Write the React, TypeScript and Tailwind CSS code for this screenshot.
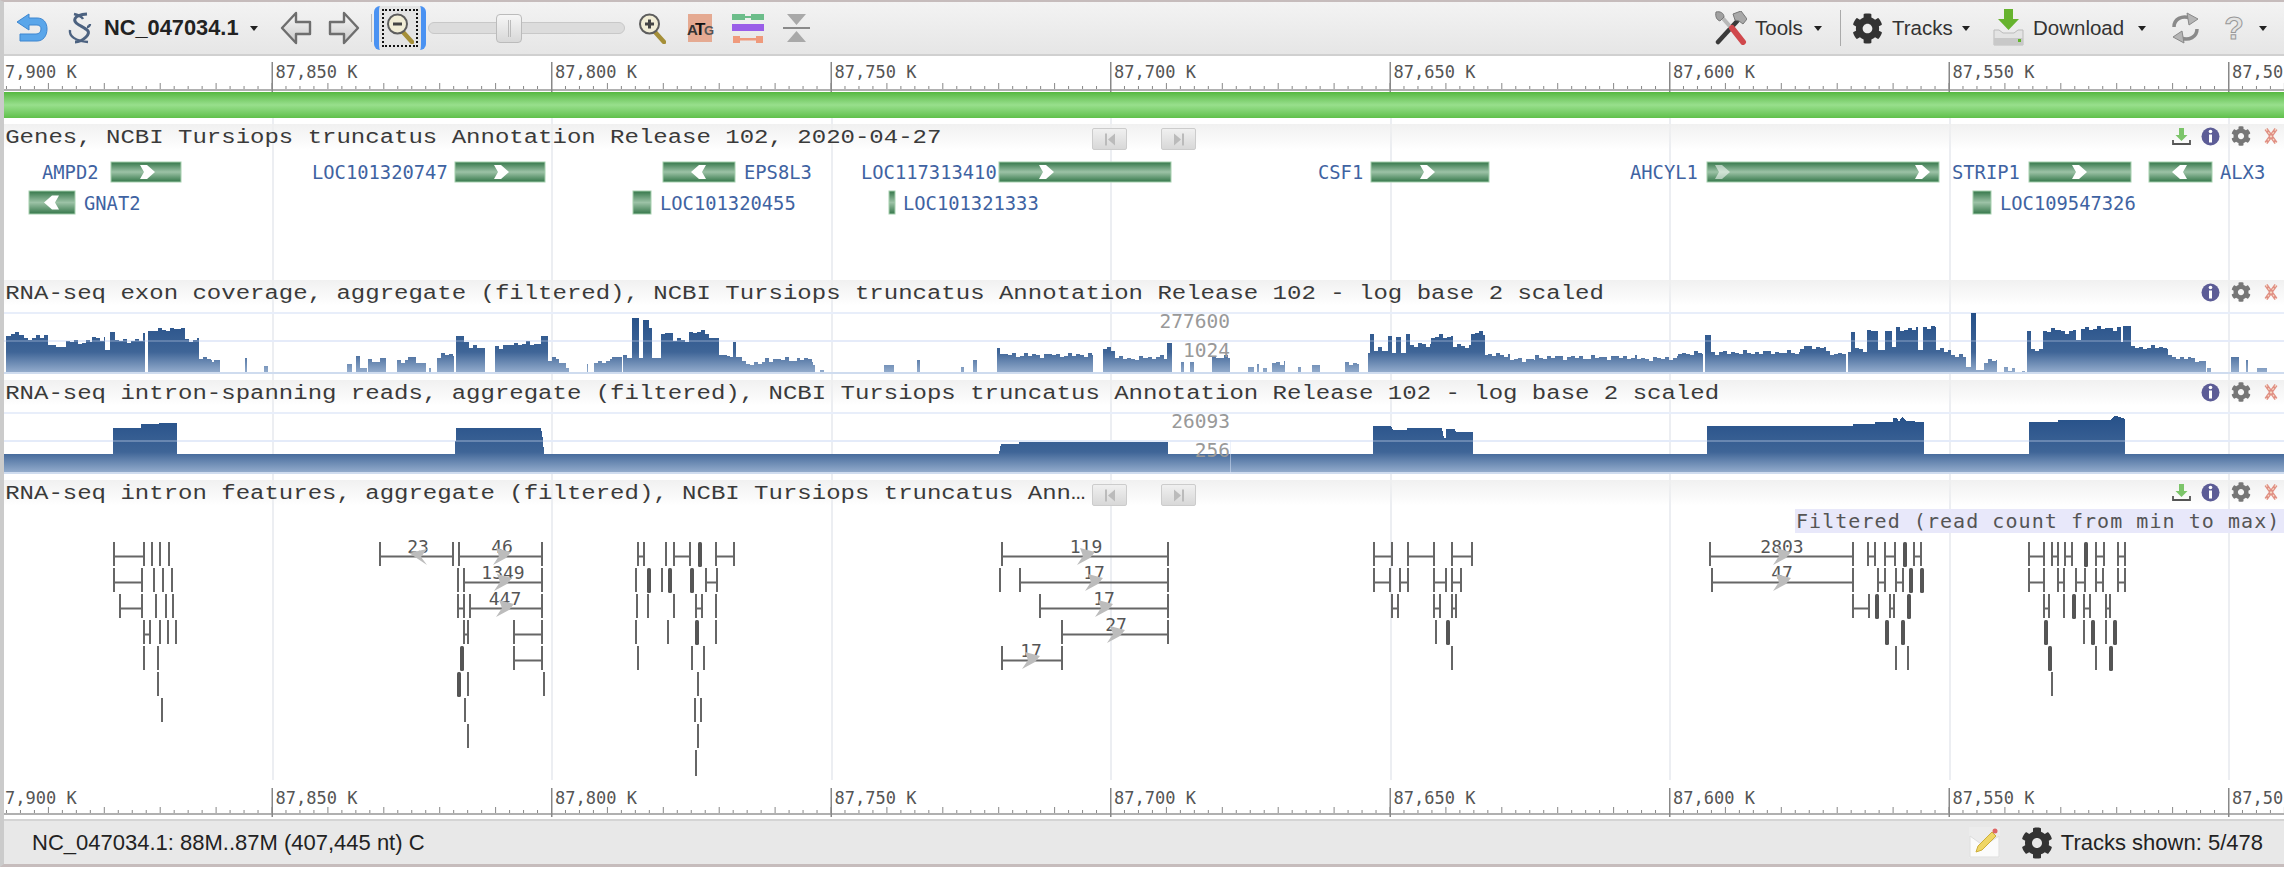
import { FaCog } from "react-icons/fa";

const MONO = "font-['DejaVu_Sans_Mono',monospace]";
const MAJORS = [-8, 271.5, 551, 830.5, 1110, 1389.5, 1669, 1948.5, 2228];
const MAJOR_LABELS = ["7,900 K", "87,850 K", "87,800 K", "87,750 K", "87,700 K", "87,650 K", "87,600 K", "87,550 K", "87,50"];

type Seg = [number, number, number];

// traced from the coverage track: [x0, x1, y], in crop units
const EXON_A: Seg[] = [
  [12, 22, 197], [22, 48, 192], [48, 70, 208], [70, 95, 198], [95, 110, 225], [110, 130, 232], [130, 180, 215], [180, 205, 205], [205, 215, 240], [215, 225, 185],
  [225, 280, 212], [280, 285, 190], [290, 310, 183], [310, 355, 178], [355, 362, 175], [362, 390, 210], [390, 415, 265], [415, 420, 275], [420, 432, 270],
  [480, 484, 265], [518, 526, 288], [680, 690, 282], [697, 705, 258], [705, 720, 295], [722, 745, 275], [745, 757, 265], [778, 800, 272], [800, 815, 260], [815, 835, 280], [840, 845, 295],
  [857, 865, 265], [865, 890, 253], [893, 910, 198], [910, 920, 217], [920, 950, 232], [970, 1000, 230], [1000, 1060, 222], [1060, 1075, 198], [1075, 1095, 268], [1095, 1110, 280], [1110, 1115, 295],
  [1150, 1153, 282], [1165, 1200, 275], [1200, 1220, 262], [1222, 1228, 255], [1228, 1238, 265], [1238, 1252, 145], [1252, 1260, 265], [1260, 1272, 150], [1272, 1278, 175], [1278, 1296, 265],
  [1296, 1320, 188], [1320, 1350, 210], [1350, 1390, 187], [1390, 1410, 203], [1410, 1430, 255], [1430, 1437, 262], [1437, 1442, 215], [1442, 1455, 262], [1455, 1500, 280], [1500, 1568, 268],
];
const EXON_B: Seg[] = [
  [0, 25, 268], [25, 30, 285], [40, 48, 300], [165, 185, 285], [230, 236, 270], [316, 322, 290], [340, 347, 270], [387, 392, 235], [392, 575, 255], [593, 618, 235], [618, 675, 265], [675, 720, 262], [720, 730, 218],
  [747, 752, 275], [765, 772, 275], [807, 843, 262], [878, 890, 290], [895, 900, 283], [908, 915, 295], [925, 950, 278], [977, 982, 290], [1003, 1020, 285], [1068, 1095, 280], [1113, 1118, 250], [1118, 1126, 192],
  [1126, 1153, 240], [1153, 1160, 198], [1160, 1168, 250], [1168, 1178, 200], [1178, 1188, 250], [1188, 1196, 192], [1196, 1237, 225], [1237, 1280, 200], [1280, 1315, 228], [1315, 1343, 190],
];
const EXON_C: Seg[] = [
  [0, 50, 255], [50, 100, 268], [100, 300, 262], [300, 380, 265], [380, 430, 250], [433, 445, 195], [445, 620, 248], [620, 670, 232], [670, 710, 250], [713, 720, 245], [720, 728, 187], [728, 750, 240],
  [750, 772, 183], [772, 785, 240], [785, 800, 182], [800, 808, 230], [808, 850, 177], [850, 860, 240], [860, 885, 170], [885, 915, 240], [915, 945, 258], [945, 955, 290], [955, 965, 128], [965, 980, 300],
  [980, 1005, 272], [1020, 1040, 295], [1055, 1060, 303], [1065, 1072, 182], [1072, 1095, 240], [1095, 1130, 180], [1130, 1160, 185], [1160, 1170, 210], [1170, 1248, 175], [1248, 1252, 215], [1252, 1268, 168],
  [1268, 1340, 232], [1340, 1385, 262], [1385, 1415, 272], [1418, 1425, 295], [1465, 1480, 260], [1493, 1498, 270], [1515, 1535, 295],
];

function exonPath() {
  let d = "";
  let n = 0;
  const add = (segs: Seg[], base: number) => {
    for (const [a, b, zy] of segs) {
      const x0 = Math.round(base + a / 1.96);
      const x1 = Math.round(base + b / 1.96);
      const y = 270 + zy / 3;
      d += `M${x0} 373 `;
      if (x1 - x0 > 10) {
        for (let x = x0; x < x1; x += 4) {
          n += 1;
          const yy = Math.round(y + Math.sin(n * 2.3) * 1.6 + Math.sin(n * 5.1));
          d += `L${x} ${yy} L${Math.min(x + 4, x1)} ${yy} `;
        }
      } else {
        d += `L${x0} ${Math.round(y)} L${x1} ${Math.round(y)} `;
      }
      d += `L${x1} 373 Z `;
    }
  };
  add(EXON_A, 0);
  add(EXON_B, 800);
  add(EXON_C, 1484);
  return d;
}

const INTRON_TOP: [number, number][] = [
  [113, 454], [113, 428], [141, 428], [141, 424], [177, 423], [177, 454],
  [455, 454], [456, 428], [541, 428], [543, 440], [544, 454],
  [999, 454], [1001, 444], [1019, 444], [1019, 442], [1168, 442], [1168, 454],
  [1373, 454], [1373, 426], [1391, 426], [1393, 430], [1407, 430], [1407, 428], [1442, 428], [1444, 438], [1446, 438], [1446, 429], [1455, 429], [1456, 432], [1473, 432], [1473, 454],
  [1707, 454], [1707, 426], [1853, 426], [1853, 424], [1875, 424], [1875, 422], [1893, 422], [1893, 418], [1897, 418], [1899, 422], [1902, 417], [1906, 421], [1924, 422], [1924, 454],
  [2029, 454], [2029, 422], [2058, 422], [2058, 420], [2110, 420], [2115, 416], [2120, 417], [2125, 419], [2125, 454],
];

const intronPath = `M4 473 L4 454 ${INTRON_TOP.map(([x, y]) => `L${x} ${y}`).join(" ")} L2284 454 L2284 473 Z`;

type Gene = { name: string; row: number; box: [number, number]; label: number; arrows?: [number, "r" | "l", number?][] };

const GENES: Gene[] = [
  { name: "AMPD2", row: 0, box: [111, 181], label: 42, arrows: [[147, "r"]] },
  { name: "LOC101320747", row: 0, box: [455, 545], label: 312, arrows: [[501, "r"]] },
  { name: "EPS8L3", row: 0, box: [663, 735], label: 744, arrows: [[699, "l"]] },
  { name: "LOC117313410", row: 0, box: [999, 1171], label: 861, arrows: [[1046, "r"]] },
  { name: "CSF1", row: 0, box: [1371, 1489], label: 1318, arrows: [[1427, "r"]] },
  { name: "AHCYL1", row: 0, box: [1707, 1939], label: 1630, arrows: [[1722, "r", 0.55], [1922, "r"]] },
  { name: "STRIP1", row: 0, box: [2029, 2131], label: 1952, arrows: [[2079, "r"]] },
  { name: "ALX3", row: 0, box: [2149, 2212], label: 2220, arrows: [[2180, "l"]] },
  { name: "GNAT2", row: 1, box: [29, 75], label: 84, arrows: [[52, "l"]] },
  { name: "LOC101320455", row: 1, box: [633, 651], label: 660 },
  { name: "LOC101321333", row: 1, box: [889, 895], label: 903 },
  { name: "LOC109547326", row: 1, box: [1973, 1991], label: 2000 },
];

// intron features: H = two ticks joined, T = lone tick, B = heavy tick
const H: [number, number, number][] = [
  [0, 114, 144], [1, 114, 142], [2, 120, 142], [3, 144, 150],
  [0, 380, 453], [0, 459, 542], [1, 464, 542], [2, 458, 464], [2, 470, 542], [3, 464, 468], [3, 514, 542], [4, 514, 542],
  [0, 638, 644], [0, 674, 690], [0, 716, 734], [1, 706, 717], [2, 696, 702],
  [0, 1002, 1168], [1, 1020, 1168], [2, 1040, 1168], [3, 1062, 1168], [4, 1002, 1062],
  [0, 1374, 1392], [0, 1408, 1434], [0, 1452, 1472], [1, 1374, 1390], [1, 1400, 1408], [1, 1434, 1446], [1, 1452, 1461], [2, 1392, 1398], [2, 1434, 1440], [2, 1452, 1456],
  [0, 1710, 1853], [0, 1868, 1875], [0, 1885, 1895], [0, 1914, 1921], [1, 1712, 1853], [1, 1878, 1885], [1, 1896, 1903], [2, 1853, 1869], [2, 1890, 1894],
  [0, 2029, 2044], [0, 2052, 2058], [0, 2065, 2072], [0, 2096, 2104], [0, 2118, 2125], [1, 2029, 2044], [1, 2058, 2064], [1, 2076, 2085], [1, 2096, 2103], [1, 2118, 2125], [2, 2044, 2049], [2, 2084, 2090], [2, 2106, 2110],
];
const T: [number, number][] = [
  [0, 152], [0, 160], [0, 169], [1, 154], [1, 163], [1, 172], [2, 156], [2, 166], [2, 173], [3, 160], [3, 168], [3, 176], [4, 144], [4, 158], [5, 158], [6, 162],
  [1, 458], [5, 468], [5, 544], [6, 465], [7, 468],
  [0, 666], [1, 636], [1, 662], [2, 637], [2, 648], [2, 674], [2, 716], [3, 636], [3, 668], [3, 716], [4, 638], [4, 692], [4, 704], [5, 698], [6, 695], [6, 701], [7, 698], [8, 696],
  [1, 1000], [3, 1436], [4, 1452],
  [4, 1896], [4, 1908],
  [2, 2064], [3, 2084], [3, 2106], [4, 2096], [5, 2052],
];
const B: [number, number][] = [
  [4, 462], [5, 459],
  [0, 700], [1, 649], [1, 670], [1, 692], [3, 697],
  [3, 1448],
  [0, 1905], [1, 1911], [1, 1922], [2, 1877], [2, 1909], [3, 1887], [3, 1903],
  [0, 2086], [2, 2074], [3, 2046], [3, 2093], [3, 2115], [4, 2050], [4, 2111],
];
const COUNTS: [string, number, number, boolean?][] = [
  ["23", 418, 0, true], ["46", 502, 0], ["1349", 503, 1], ["447", 505, 2],
  ["119", 1086, 0], ["17", 1094, 1], ["17", 1104, 2], ["27", 1116, 3], ["17", 1031, 4],
  ["2803", 1782, 0], ["47", 1782, 1],
];

function rowTop(r: number) {
  return 542 + r * 26;
}

function Ruler({ labelY, tickTop }: { labelY: number; tickTop: number }) {
  const ticks: number[] = [];
  for (let i = 0; i < 170; i++) ticks.push(i);
  return (
    <svg viewBox="4 0 2280 39" className="block h-[39px] w-[2280px] overflow-visible">
      <rect x="4" y="33" width="2280" height="2" fill="#b0b0b0" />
      {ticks.map((i) => {
        const x = -8 + i * 13.975;
        const tall = i % 4 === 0;
        return <rect key={i} x={x} y={tall ? 27 : 30} width="1" height={tall ? 6 : 3} fill="#888" />;
      })}
      {MAJORS.map((x, i) => (
        <g key={x}>
          <rect x={x} y={tickTop} width="1.5" height={37 - tickTop} fill="#888" />
          <text x={i === 0 ? 5 : x + 4} y={labelY} fontFamily="DejaVu Sans Mono, monospace" fontSize="17" fill="#555">
            {MAJOR_LABELS[i]}
          </text>
        </g>
      ))}
    </svg>
  );
}

function Caret() {
  return <div className="h-0 w-0 border-x-[4.5px] border-t-[5px] border-x-transparent border-t-[#222]" />;
}

function InfoIcon() {
  return (
    <svg viewBox="0 0 19 19" className="h-[19px] w-[19px]">
      <circle cx="9.5" cy="9.5" r="9" fill="#5c5c96" />
      <circle cx="9.5" cy="4.5" r="1.8" fill="#fff" />
      <rect x="8" y="7.5" width="3" height="8" fill="#fff" />
    </svg>
  );
}

function CloseIcon() {
  return (
    <svg viewBox="0 0 14 18" className="h-[18px] w-[14px]">
      <path d="M2 2 L12 16 M12 2 L2 16" stroke="#e08f84" strokeWidth="3.6" />
      <path d="M2 2 L12 16 M12 2 L2 16" stroke="#f6dcc4" strokeWidth="1.2" strokeDasharray="2 2" />
    </svg>
  );
}

function SmallDownload() {
  return (
    <svg viewBox="0 0 19 19" className="h-[19px] w-[19px]">
      <path d="M7 1 H12 V8 H15.5 L9.5 14 L3.5 8 H7 Z" fill="#7cc56a" />
      <path d="M1 13 V17 H18 V13" fill="none" stroke="#555" strokeWidth="1.8" />
    </svg>
  );
}

function TrackIcons({ download }: { download?: boolean }) {
  return (
    <div className="absolute top-[2px] right-[6px] flex items-center">
      {download && (
        <div className="mr-[10px]">
          <SmallDownload />
        </div>
      )}
      <InfoIcon />
      <FaCog className="mr-[13px] ml-[11px] h-[20px] w-[20px] text-[#777]" />
      <CloseIcon />
    </div>
  );
}

function NavButtons() {
  return (
    <div className="absolute top-[4px] left-[1088px] flex gap-[34px]">
      {[0, 1].map((dir) => (
        <div key={dir} className="flex h-[22px] w-[35px] items-center justify-center rounded-[2px] border border-[#ccc] bg-gradient-to-b from-[#f0f0f0] to-[#d8d8d8]">
          <svg viewBox="0 0 14 12" className="h-[13px] w-[14px]">
            {dir === 0 ? <path d="M2 0 H4 V12 H2 Z M12 0 V12 L5 6 Z" fill="#bbb" /> : <path d="M10 0 H12 V12 H10 Z M2 0 V12 L9 6 Z" fill="#bbb" />}
          </svg>
        </div>
      ))}
    </div>
  );
}

function TrackHeader({ title, download, nav }: { title: string; download?: boolean; nav?: boolean }) {
  return (
    <div className="relative h-[26px] bg-gradient-to-b from-[#efefef]/90 to-transparent">
      <div className="origin-left scale-x-[1.2] pt-[2px] pl-[1px] font-['Liberation_Mono',monospace] text-[20px] leading-[24px] whitespace-nowrap text-[#3a3a3a]">{title}</div>
      {nav && <NavButtons />}
      <TrackIcons download={download} />
    </div>
  );
}

function GeneTrack() {
  return (
    <svg viewBox="4 150 2280 130" className="block h-[130px] w-[2280px]">
      <defs>
        <linearGradient id="geneFill" x1="0" y1="0" x2="0" y2="1">
          <stop offset="0" stopColor="#35774a" />
          <stop offset="0.5" stopColor="#9cc2a6" />
          <stop offset="1" stopColor="#35774a" />
        </linearGradient>
      </defs>
      {GENES.map((g) => {
        const top = g.row === 0 ? 162 : 191;
        const h = g.row === 0 ? 20 : 23;
        const cy = top + h / 2;
        return (
          <g key={g.name}>
            <rect x={g.box[0]} y={top} width={g.box[1] - g.box[0]} height={h} fill="url(#geneFill)" stroke="#a5cfae" strokeWidth="1" />
            {g.arrows?.map(([x, dir, op]) => (
              <polygon
                key={x}
                points={dir === "r" ? "-7,-7 0,-7 8,0 0,7 -7,7 -3,0" : "7,-7 0,-7 -8,0 0,7 7,7 3,0"}
                transform={`translate(${x} ${cy})`}
                fill="#fff"
                opacity={op ?? 1}
              />
            ))}
            <text x={g.label} y={cy + 7} fontFamily="DejaVu Sans Mono, monospace" fontSize="18.8" fill="#3f63a2">
              {g.name}
            </text>
          </g>
        );
      })}
    </svg>
  );
}

function Scale({ top, bottom, topY, botY }: { top: string; bottom: string; topY: number; botY: number }) {
  return (
    <g fontFamily="DejaVu Sans Mono, monospace" fontSize="19.5" fill="#999" textAnchor="end">
      <text x="1230" y={topY}>
        {top}
      </text>
      <text x="1230" y={botY}>
        {bottom}
      </text>
    </g>
  );
}

function Coverage() {
  return (
    <svg viewBox="4 306 2280 74" className="block h-[74px] w-[2280px]">
      <defs>
        <linearGradient id="exonFill" gradientUnits="userSpaceOnUse" x1="0" y1="313" x2="0" y2="373">
          <stop offset="0" stopColor="#244f88" />
          <stop offset="0.65" stopColor="#3f6597" />
          <stop offset="1" stopColor="#96aece" />
        </linearGradient>
      </defs>
      <rect x="4" y="312" width="2280" height="2" fill="#e8eefa" />
      <rect x="4" y="340" width="2280" height="2" fill="#e8eefa" />
      <path d={exonPath()} fill="url(#exonFill)" shapeRendering="crispEdges" />
      <rect x="4" y="340" width="2280" height="2" fill="#dbe5f7" opacity="0.25" />
      <rect x="4" y="372" width="2280" height="2" fill="#cfdcef" />
      <Scale top="277600" bottom="1024" topY={328} botY={357} />
    </svg>
  );
}

function Spanning() {
  return (
    <svg viewBox="4 406 2280 74" className="block h-[74px] w-[2280px]">
      <defs>
        <linearGradient id="spanFill" gradientUnits="userSpaceOnUse" x1="0" y1="413" x2="0" y2="473">
          <stop offset="0" stopColor="#244f88" />
          <stop offset="0.65" stopColor="#3f6597" />
          <stop offset="1" stopColor="#96aece" />
        </linearGradient>
      </defs>
      <rect x="4" y="412" width="2280" height="2" fill="#e8eefa" />
      <rect x="4" y="440" width="2280" height="2" fill="#e8eefa" />
      <path d={intronPath} fill="url(#spanFill)" shapeRendering="crispEdges" />
      <rect x="4" y="440" width="2280" height="2" fill="#dbe5f7" opacity="0.3" />
      <rect x="4" y="472" width="2280" height="2" fill="#cfdcef" />
      <rect x="1230" y="440" width="1" height="33" fill="#dbe5f7" opacity="0.5" />
      <Scale top="26093" bottom="256" topY={428} botY={457} />
    </svg>
  );
}

function Features() {
  return (
    <svg viewBox="4 506 2280 274" className="block h-[274px] w-[2280px]">
      {H.map(([r, a, b], i) => (
        <g key={i} fill="#666">
          <rect x={a - 1} y={rowTop(r)} width="2" height="24" />
          <rect x={b - 1} y={rowTop(r)} width="2" height="24" />
          <rect x={a} y={rowTop(r) + 13.5} width={b - a} height="2" />
        </g>
      ))}
      {T.map(([r, x], i) => (
        <rect key={i} x={x - 1} y={rowTop(r)} width="2" height="24" fill="#666" />
      ))}
      {B.map(([r, x], i) => (
        <rect key={i} x={x - 2} y={rowTop(r)} width="4" height="25" rx="1.5" fill="#555" />
      ))}
      {/* the last reads trail off below the lower row */}
      <rect x="695" y="752" width="2" height="24" fill="#666" />
      {COUNTS.map(([n, x, r, left], i) => (
        <g key={i}>
          <text x={x} y={rowTop(r) + 11} textAnchor="middle" fontFamily="DejaVu Sans Mono, monospace" fontSize="18" fill="#555">
            {n}
          </text>
          <path
            d={left ? "M9 10 L3 2 L9 -6 L-9 -2 L-3 2 Z" : "M-9 10 L-3 1 L-6 -7 L9 -3 L4 3 Z"}
            transform={`translate(${x} ${rowTop(r) + 13})`}
            fill="#bcbcbc"
          />
        </g>
      ))}
    </svg>
  );
}

function BackIcon() {
  return (
    <svg viewBox="0 0 33 30" className="h-[30px] w-[33px]">
      <path d="M14 1 L2 9 L14 17 V12 H22 C25 12 26 14 26 16 C26 19 24 21 21 21 H5 V28 H22 C28 28 32 23 32 16 C32 9 28 5 22 5 H14 Z" fill="#5aa6ea" stroke="#3d86d0" strokeWidth="1" />
    </svg>
  );
}

function HelixIcon() {
  return (
    <svg viewBox="0 0 29 32" className="h-[32px] w-[29px]" fill="none" stroke="#4c6280" strokeWidth="3">
      <path d="M21 2 C7 3 6 9 13 13 C20 17 26 19 20 25 C17 28 13 30 9 30" />
      <path d="M8 2 C12 3 16 5 17 7 M4 18 C3 24 9 29 22 30 M24 12 C24 14 22 15 21 15" strokeWidth="2.4" />
    </svg>
  );
}

function OutlineArrow({ flip }: { flip?: boolean }) {
  return (
    <svg viewBox="0 0 32 34" className={flip ? "h-[34px] w-[32px] -scale-x-100" : "h-[34px] w-[32px]"}>
      <defs>
        <linearGradient id="arrowFill" x1="0" y1="0" x2="0" y2="1">
          <stop offset="0" stopColor="#fafafa" />
          <stop offset="1" stopColor="#c8c8c8" />
        </linearGradient>
      </defs>
      <path d="M16 2 L2 17 L16 32 V23 H30 V11 H16 Z" fill="url(#arrowFill)" stroke="#6e6e6e" strokeWidth="2.4" strokeLinejoin="round" />
    </svg>
  );
}

function Magnifier({ plus }: { plus?: boolean }) {
  return (
    <svg viewBox="0 0 28 32" className="h-[32px] w-[28px]">
      <path d="M17 20 L26 30" stroke="#a58f38" strokeWidth="4.5" strokeLinecap="round" />
      <circle cx="11.5" cy="12" r="9.5" fill="#f1edd6" stroke="#5d5d5d" strokeWidth="2" />
      <rect x="7" y="10.5" width="9" height="3" fill="#444" />
      {plus && <rect x="10" y="7.5" width="3" height="9" fill="#444" />}
    </svg>
  );
}

function AtgIcon() {
  return (
    <svg viewBox="0 0 28 30" className="h-[30px] w-[28px]">
      <rect x="2" y="1" width="24" height="28" fill="#e5aa92" />
      <text x="1" y="22" fontFamily="Liberation Sans, sans-serif" fontSize="15" fontWeight="700" fill="#333">
        A
      </text>
      <text x="9" y="22" fontFamily="Liberation Sans, sans-serif" fontSize="17" fontWeight="700" fill="#111">
        T
      </text>
      <text x="18" y="22" fontFamily="Liberation Sans, sans-serif" fontSize="13" fontWeight="700" fill="#555">
        G
      </text>
    </svg>
  );
}

function AlignIcon() {
  return (
    <svg viewBox="0 0 32 30" className="h-[30px] w-[32px]">
      <rect x="0" y="1" width="13" height="6" fill="#6cbd8a" />
      <rect x="19" y="1" width="13" height="6" fill="#6cbd8a" />
      <rect x="13" y="3" width="6" height="2" fill="#6cbd8a" />
      <rect x="0" y="11" width="32" height="7" fill="#9a5ee8" />
      <rect x="1" y="23" width="7" height="7" fill="#ef9a7c" />
      <rect x="24" y="23" width="7" height="7" fill="#ef9a7c" />
      <rect x="8" y="25" width="16" height="2.5" fill="#ef9a7c" />
    </svg>
  );
}

function CollapseIcon() {
  return (
    <svg viewBox="0 0 27 30" className="h-[30px] w-[27px]">
      <path d="M4 1 H23 L13.5 12 Z M4 29 H23 L13.5 18 Z" fill="#a9a9a9" />
      <rect x="0" y="14" width="27" height="2" fill="#8a8a8a" />
    </svg>
  );
}

function ToolsIcon() {
  return (
    <svg viewBox="0 0 33 34" className="h-[34px] w-[33px]">
      <path d="M4 31 L26 7" stroke="#3a3a3a" strokeWidth="4.5" strokeLinecap="round" />
      <path d="M19 3 L27 0 L33 8 L29 13 L25 10 L21 9 Z" fill="#a8a8a8" stroke="#777" />
      <path d="M6 4 L20 20" stroke="#b8b8b8" strokeWidth="4" />
      <path d="M18 17 L29 31" stroke="#d0484c" strokeWidth="6" strokeLinecap="round" />
      <path d="M2 1 C6 0 10 2 10 6 L6 10 C3 9 1 6 2 1 Z" fill="#a0a0a0" stroke="#777" />
    </svg>
  );
}

function DownloadIcon() {
  return (
    <svg viewBox="0 0 31 38" className="h-[38px] w-[31px]">
      <path d="M11 0 H20 V10 H26 L15.5 21 L5 10 H11 Z" fill="#66b32e" />
      <path d="M1 21 H6 L10 24 H21 L25 21 H30 V36 H1 Z" fill="#e4e4e4" stroke="#bbb" />
      <rect x="1" y="29" width="29" height="7" fill="#c8c8c8" />
      <rect x="25" y="30" width="3" height="3" fill="#62b52c" />
    </svg>
  );
}

function RefreshIcon() {
  return (
    <svg viewBox="0 0 29 32" className="h-[32px] w-[29px]" fill="none" stroke="#8a8a8a" strokeWidth="3.5">
      <path d="M3 15 C3 7 11 3 19 6" />
      <path d="M26 17 C26 25 18 29 10 26" />
      <path d="M16 1 L27 7 L18 13 Z" fill="#b5b5b5" stroke="#888" strokeWidth="1" />
      <path d="M13 31 L2 25 L11 19 Z" fill="#b5b5b5" stroke="#888" strokeWidth="1" />
    </svg>
  );
}

function NoteIcon() {
  return (
    <svg viewBox="0 0 31 31" className="h-[31px] w-[31px]">
      <rect width="31" height="31" fill="#ececec" />
      <path d="M1 9 L15 19 L30 9 V30 H1 Z" fill="#fbfbfb" stroke="#ddd" />
      <path d="M7 25 L9 19 L23 5 L27 9 L13 23 Z" fill="#efd666" stroke="#cdae3a" />
      <circle cx="26" cy="4" r="2.5" fill="#d66" />
    </svg>
  );
}

function Toolbar() {
  const label = "font-['Liberation_Sans',sans-serif] text-[20.5px] whitespace-nowrap text-[#333]";
  return (
    <div className="flex h-[52px] shrink-0 items-center bg-gradient-to-b from-[#f3f3f3] to-[#e6e6e6]">
      <div className="ml-[11px]">
        <BackIcon />
      </div>
      <div className="ml-[18px]">
        <HelixIcon />
      </div>
      <span className="ml-[9px] w-[136px] font-['Liberation_Sans',sans-serif] text-[21.8px] font-bold whitespace-nowrap text-[#222]">NC_047034.1</span>
      <div className="ml-[10px]">
        <Caret />
      </div>
      <div className="ml-[22px]">
        <OutlineArrow />
      </div>
      <div className="ml-[16px]">
        <OutlineArrow flip />
      </div>
      <div className="ml-[11px] h-[28px] w-px bg-[#bbb]" />
      <div className="ml-[2px] flex h-[44px] w-[52px] items-center justify-center rounded-[6px] border-x-[5px] border-[#4a92f2] bg-[#e4e4e4]">
        <div className="flex h-[38px] w-[36px] items-center justify-center border-2 border-dotted border-[#111]">
          <Magnifier />
        </div>
      </div>
      <div className="relative ml-[2px] flex h-[30px] w-[197px] items-center">
        <div className="h-[12px] w-full rounded-full border border-[#c8c8c8] bg-[#dcdcdc]" />
        <div className="absolute left-[68px] flex h-[29px] w-[26px] items-center justify-center rounded-[4px] border border-[#bbb] bg-gradient-to-b from-[#f6f6f6] to-[#d8d8d8]">
          <div className="h-[17px] w-[3px] border-x border-[#bbb]" />
        </div>
      </div>
      <div className="ml-[13px]">
        <Magnifier plus />
      </div>
      <div className="ml-[20px]">
        <AtgIcon />
      </div>
      <div className="ml-[18px]">
        <AlignIcon />
      </div>
      <div className="ml-[19px]">
        <CollapseIcon />
      </div>

      <div className="ml-auto flex items-center pr-[17px]">
        <ToolsIcon />
        <span className={`ml-[8px] w-[49px] ${label}`}>Tools</span>
        <div className="ml-[10px]">
          <Caret />
        </div>
        <div className="ml-[18px] h-[36px] w-px bg-[#aaa]" />
        <FaCog className="ml-[11px] h-[31px] w-[31px] text-[#333]" />
        <span className={`ml-[9px] w-[60px] ${label}`}>Tracks</span>
        <div className="ml-[10px]">
          <Caret />
        </div>
        <div className="ml-[23px]">
          <DownloadIcon />
        </div>
        <span className={`ml-[9px] w-[95px] ${label}`}>Download</span>
        <div className="ml-[10px]">
          <Caret />
        </div>
        <div className="ml-[25px]">
          <RefreshIcon />
        </div>
        <span className="ml-[24px] w-[20px] text-center font-['Liberation_Sans',sans-serif] text-[32px] leading-none font-bold text-[#e4e4e4] [-webkit-text-stroke:1px_#999]">?</span>
        <div className="ml-[15px]">
          <Caret />
        </div>
      </div>
    </div>
  );
}

export default function App() {
  return (
    <div className="h-[874px] w-[2284px] overflow-hidden bg-white">
      <div className="flex h-[867px] flex-col border-t-2 border-b-[3px] border-l-4 border-t-[#c6bcbc] border-b-[#c6bcbc] border-l-[#cbcbcb]">
        <Toolbar />
        <div className="h-[2px] shrink-0 bg-[#d0d0d0]" />
        <div className="h-[36px] shrink-0">
          <Ruler labelY={22} tickTop={6} />
        </div>
        <div className="h-[26px] shrink-0 bg-gradient-to-b from-[#55b83f] via-[#98df8c] to-[#5fc04a]" />

        <div className="relative h-[662px] shrink-0">
          {/* vertical grid lines behind every track */}
          <div className="absolute inset-0">
            {MAJORS.slice(1).map((x) => (
              <div key={x} className="absolute top-0 bottom-0 w-[2px] bg-[#eceef2]" style={{ left: x - 4 }} />
            ))}
          </div>
          <div className="relative flex h-full flex-col">
            <div className="h-[6px]" />
            <TrackHeader title="Genes, NCBI Tursiops truncatus Annotation Release 102, 2020-04-27" download nav />
            <GeneTrack />
            <TrackHeader title="RNA-seq exon coverage, aggregate (filtered), NCBI Tursiops truncatus Annotation Release 102 - log base 2 scaled" />
            <Coverage />
            <TrackHeader title="RNA-seq intron-spanning reads, aggregate (filtered), NCBI Tursiops truncatus Annotation Release 102 - log base 2 scaled" />
            <Spanning />
            <TrackHeader title="RNA-seq intron features, aggregate (filtered), NCBI Tursiops truncatus Ann…" download nav />
            <Features />
            <div className={`absolute top-[391px] right-0 h-[24px] w-[489px] bg-[#e8e8fa] pl-[1px] text-[20px] leading-[24px] tracking-[1.05px] whitespace-nowrap text-[#555] ${MONO}`}>
              Filtered (read count from min to max)
            </div>
          </div>
        </div>

        <div className="h-[39px] shrink-0">
          <Ruler labelY={24} tickTop={8} />
        </div>
        <div className="flex min-h-0 flex-1 items-center border-t-2 border-[#d4d4d4] bg-[#e8e8e8] pr-[21px] pl-[28px] font-['Liberation_Sans',sans-serif] text-[22px] text-[#222]">
          <span>NC_047034.1: 88M..87M (407,445 nt) C</span>
          <div className="ml-auto">
            <NoteIcon />
          </div>
          <FaCog className="ml-[21px] h-[32px] w-[32px] text-[#333]" />
          <span className="ml-[8px]">Tracks shown: 5/478</span>
        </div>
      </div>
    </div>
  );
}
